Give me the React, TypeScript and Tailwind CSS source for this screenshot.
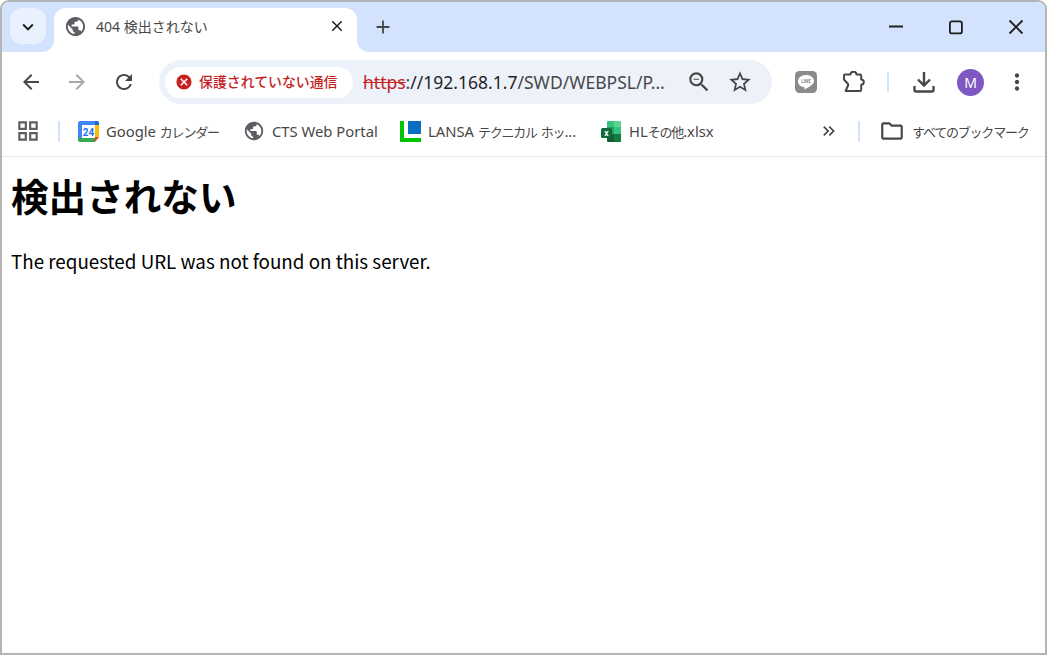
import React from 'react';
import {
  MdAdd,
  MdArrowBack,
  MdArrowForward,
  MdCancel,
  MdClose,
  MdKeyboardArrowDown,
  MdKeyboardDoubleArrowRight,
  MdMoreVert,
  MdOutlineFolder,
  MdOutlineGridView,
  MdOutlineStarBorder,
  MdOutlineZoomOut,
  MdPublic,
  MdRefresh,
} from 'react-icons/md';

const uiFont = "font-['Noto_Sans','Noto_Sans_CJK_JP',sans-serif]";

function CalendarIcon() {
  return (
    <svg width="21" height="21" viewBox="0 0 21 21" className="shrink-0">
      <rect x="0" y="0" width="21" height="21" rx="2" fill="#fff" />
      <path d="M2 0h15v4H4v13H0V2a2 2 0 0 1 2-2z" fill="#4285f4" />
      <path d="M17 0h2a2 2 0 0 1 2 2v3h-4z" fill="#1967d2" />
      <path d="M17 4h4v12h-4z" fill="#fbbc04" />
      <path d="M0 17h17v4H2a2 2 0 0 1-2-2z" fill="#34a853" />
      <path d="M17 16h4l-4 5z" fill="#ea4335" />
      <text x="10.5" y="14.5" textAnchor="middle" fontSize="10" fontWeight="700" fill="#1a73e8" fontFamily="Roboto, sans-serif">24</text>
    </svg>
  );
}

function LansaIcon() {
  return (
    <svg width="21" height="21" viewBox="0 0 21 21" className="shrink-0">
      <path d="M0 0h4v17h17v4H0z" fill="#00c400" />
      <rect x="8" y="0" width="13" height="13" fill="#0a6fc2" />
    </svg>
  );
}

function ExcelIcon() {
  return (
    <svg width="21" height="21" viewBox="0 0 21 21" className="shrink-0">
      <path d="M6 1a1 1 0 0 1 1-1h12a1 1 0 0 1 1 1v5H6z" fill="#33c481" />
      <path d="M13 0h6a1 1 0 0 1 1 1v5h-7z" fill="#5fd38d" />
      <rect x="6" y="6" width="7" height="7" fill="#21a366" />
      <rect x="13" y="6" width="7" height="7" fill="#33c481" />
      <path d="M6 13h14v7a1 1 0 0 1-1 1H7a1 1 0 0 1-1-1z" fill="#185c37" />
      <rect x="13" y="13" width="7" height="8" fill="#107c41" />
      <rect x="0" y="7" width="11" height="10" rx="1.5" fill="#0f6b3a" />
      <text x="5.5" y="15" textAnchor="middle" fontSize="8.5" fontWeight="700" fill="#fff" fontFamily="Roboto, sans-serif">x</text>
    </svg>
  );
}

function LineIcon() {
  return (
    <svg width="22" height="22" viewBox="0 0 22 22">
      <rect width="22" height="22" rx="4.5" fill="#8a8a8a" />
      <path d="M11 4c-4.6 0-8 2.7-8 6.2 0 3.1 2.6 5.6 6.2 6.1.4.1.5.3.4.7l-.1 1c0 .3.2.5.6.3 1.6-.8 6.9-3.8 8.2-6 .5-.7.7-1.4.7-2.1C19 6.7 15.6 4 11 4z" fill="#fff" />
      <text x="11" y="11.8" textAnchor="middle" fontSize="4.6" fontWeight="700" fill="#8a8a8a" fontFamily="Roboto, sans-serif">LINE</text>
    </svg>
  );
}

function PuzzleIcon() {
  return (
    <svg width="22" height="22" viewBox="0 0 22 22" className="ml-[26px]">
      <path
        d="M2 3.500h5.500a3 2.800 0 0 1 6 0H17a1.200 1.200 0 0 1 1.200 1.200V8.500a2.600 2.600 0 0 1 0 5.200V18.800a1.200 1.200 0 0 1-1.200 1.200H2.600l2.400-5.500a1.500 1.500 0 0 0 0-1.500L1 8.500V4.500a1 1 0 0 1 1-1z"
        fill="none"
        stroke="#474747"
        strokeWidth="2"
        strokeLinejoin="round"
      />
    </svg>
  );
}

function DownloadIcon() {
  return (
    <svg width="22" height="22" viewBox="0 0 22 22" className="ml-[24px]">
      <path d="M11 1v13M5 8.500l6 6 6-6" fill="none" stroke="#474747" strokeWidth="2.400" />
      <path d="M1.500 15v4a1.500 1.500 0 0 0 1.500 1.500h16a1.500 1.500 0 0 0 1.500-1.500v-4" fill="none" stroke="#474747" strokeWidth="2.400" />
    </svg>
  );
}

function Flare({ side }: { side: 'left' | 'right' }) {
  return (
    <span className={side === 'left' ? 'absolute bottom-0 -left-3 h-3 w-3 bg-white' : 'absolute bottom-0 -right-3 h-3 w-3 bg-white'}>
      <span className={side === 'left' ? 'block h-3 w-3 rounded-br-[12px] bg-[#d3e3fd]' : 'block h-3 w-3 rounded-bl-[12px] bg-[#d3e3fd]'} />
    </span>
  );
}

// the bookmark bar sets its kana narrower than its latin text
function Kana({ children }: { children: React.ReactNode }) {
  return <span className="text-[13px] tracking-[-1.2px]">{children}</span>;
}

function Bookmark({ icon, children, className }: { icon: React.ReactNode; children: React.ReactNode; className: string }) {
  return (
    <div className={`flex items-center ${className}`}>
      {icon}
      <span className="ml-[7px] whitespace-pre text-[14.8px] text-[#474747]">{children}</span>
    </div>
  );
}

export default function App() {
  return (
    <div className={`flex h-[655px] w-full flex-col overflow-hidden rounded-t-[9px] border-2 border-[#b4b4b4] bg-white ${uiFont}`}>
      {/* tab strip */}
      <div className="flex h-[50px] shrink-0 items-end bg-[#d3e3fd]">
        <div className="mb-[8px] ml-2 flex h-9 w-9 items-center justify-center rounded-xl bg-[#e9f1fe] pt-[2px]">
          <MdKeyboardArrowDown size={22} className="text-[#1f1f1f]" />
        </div>
        <div className="relative ml-2 flex h-[44px] w-[303px] items-center rounded-t-xl bg-white pb-[8px] pl-[10px] pr-[11px]">
          <Flare side="left" />
          <Flare side="right" />
          <MdPublic size={23} className="shrink-0 text-[#5b5e63]" />
          <span className="ml-[9px] flex-1 whitespace-nowrap text-[14px] text-[#474747]">404 検出されない</span>
          <MdClose size={18} className="text-[#1f1f1f]" />
        </div>
        <div className="mb-[7px] ml-[14px] flex h-9 w-6 items-center justify-center">
          <MdAdd size={22} className="text-[#474747]" />
        </div>
        <div className="mb-[7px] ml-auto flex h-9 items-center">
          <svg width="60" height="20" viewBox="0 0 60 20">
            <path d="M23 9.500h14" stroke="#1f1f1f" strokeWidth="1.800" />
          </svg>
          <svg width="60" height="20" viewBox="0 0 60 20">
            <rect x="23.900" y="4.400" width="12" height="12" rx="2" fill="none" stroke="#1f1f1f" strokeWidth="1.800" />
          </svg>
          <svg width="60" height="20" viewBox="0 0 60 20" className="mr-[-1px]">
            <path d="M23.500 3.500l13 13m0-13l-13 13" stroke="#1f1f1f" strokeWidth="1.800" />
          </svg>
        </div>
      </div>

      {/* toolbar */}
      <div className="flex h-[60px] shrink-0 items-center rounded-t-[12px] bg-white">
        <MdArrowBack size={24} className="ml-[17px] text-[#474747]" />
        <MdArrowForward size={24} className="ml-[22px] text-[#a9a9a9]" />
        <MdRefresh size={24} className="ml-[23px] text-[#474747]" />
        <div className="ml-[23px] flex h-[44px] w-[613px] items-center rounded-full bg-[#edf2fa] pl-[6px]">
          <div className="flex h-[31px] w-[188px] items-center rounded-full bg-white pl-[10px]">
            <MdCancel size={18} className="text-[#c5221f]" />
            <span className="ml-[6px] whitespace-nowrap text-[13.9px] font-medium text-[#c5221f]">保護されていない通信</span>
          </div>
          <div className="ml-[10px] w-[304px] overflow-hidden whitespace-nowrap text-[17.5px] text-[#474747]">
            <span className="text-[#c5221f] line-through">https</span>
            <span>:</span>
            <span className="text-[#1f1f1f]">//192.168.1.7</span>
            <span>/SWD/WEBPSL/P...</span>
          </div>
          <MdOutlineZoomOut size={26} className="ml-[19px] text-[#474747]" />
          <MdOutlineStarBorder size={26} className="ml-[15px] text-[#474747]" />
        </div>
        <div className="ml-[23px]">
          <LineIcon />
        </div>
        <PuzzleIcon />
        <div className="ml-[22px] h-[20px] w-[2px] bg-[#d3e3fd]" />
        <DownloadIcon />
        <div className="ml-[22px] flex h-[27px] w-[27px] items-center justify-center rounded-full bg-[#7e57c2] text-[14px] text-white">M</div>
        <MdMoreVert size={26} className="ml-[20px] text-[#474747]" />
      </div>

      {/* bookmarks bar */}
      <div className="flex h-[45px] shrink-0 items-center border-b border-[#e8e8e8] pb-[6px]">
        <MdOutlineGridView size={26} className="ml-[13px] text-[#5f5f5f]" />
        <div className="ml-[17px] h-[21px] w-[2px] bg-[#d3e3fd]" />
        <Bookmark icon={<CalendarIcon />} className="ml-[18px] w-[165px]">
          Google <Kana>カレンダー</Kana>
        </Bookmark>
        <Bookmark icon={<MdPublic size={22} className="shrink-0 text-[#5b5e63]" />} className="w-[157px]">
          CTS Web Portal
        </Bookmark>
        <Bookmark icon={<LansaIcon />} className="w-[201px]">
          LANSA <Kana>テクニカル</Kana> <Kana>ホッ</Kana>...
        </Bookmark>
        <Bookmark icon={<ExcelIcon />} className="w-[218px]">
          HL<Kana>その他</Kana>.xlsx
        </Bookmark>
        <MdKeyboardDoubleArrowRight size={20} className="text-[#474747]" />
        <div className="ml-[19px] h-[21px] w-[2px] bg-[#d3e3fd]" />
        <MdOutlineFolder size={26} className="ml-[19px] text-[#474747]" />
        <span className="ml-[7px] whitespace-nowrap text-[14.8px] text-[#474747]">
          <Kana>すべてのブックマーク</Kana>
        </span>
      </div>

      {/* page */}
      <main className="flex-1 bg-white pl-[9px] font-['Noto_Sans_CJK_JP',sans-serif] text-black">
        <h1 className="mt-[11px] text-[37.6px] font-bold leading-[53px]">検出されない</h1>
        <p className="mt-[25px] text-[18.8px] leading-[30px]">The requested URL was not found on this server.</p>
      </main>
    </div>
  );
}
